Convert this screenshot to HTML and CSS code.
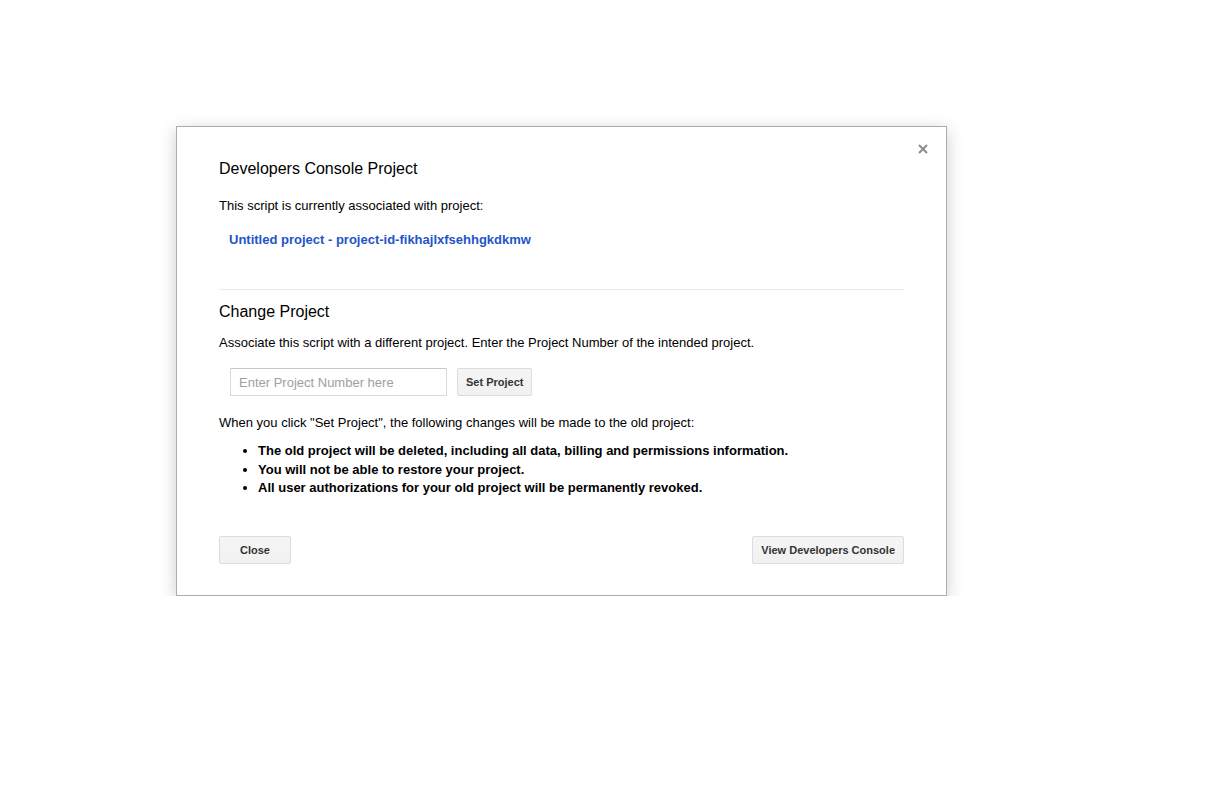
FILE: index.html
```html
<!DOCTYPE html>
<html>
<head>
<meta charset="utf-8">
<link rel="stylesheet" href="styles.css">
</head>
<body>
<div class="dialog">
  <span class="close-x" aria-label="Close">
    <svg width="10" height="10" viewBox="0 0 10 10"><path d="M1 1L9 9M9 1L1 9" stroke="#8c8c8c" stroke-width="2" fill="none"/></svg>
  </span>
  <h2 class="title">Developers Console Project</h2>
  <p class="p1">This script is currently associated with project:</p>
  <a class="proj-link" href="#">Untitled project - project-id-fikhajlxfsehhgkdkmw</a>
  <div class="sep"></div>
  <h2 class="title2">Change Project</h2>
  <p class="p2">Associate this script with a different project. Enter the Project Number of the intended project.</p>
  <div class="row">
    <input class="num-input" type="text" placeholder="Enter Project Number here">
    <button class="btn">Set Project</button>
  </div>
  <p class="p3">When you click "Set Project", the following changes will be made to the old project:</p>
  <ul class="changes">
    <li>The old project will be deleted, including all data, billing and permissions information.</li>
    <li>You will not be able to restore your project.</li>
    <li>All user authorizations for your old project will be permanently revoked.</li>
  </ul>
  <div class="footer">
    <button class="btn btn-close">Close</button>
    <button class="btn">View Developers Console</button>
  </div>
</div>
</body>
</html>
```
FILE: styles.css
```css
html, body {
  margin: 0;
  background: #fff;
}
body {
  padding: 126px 0 0 176px;
  font-family: "Liberation Sans", Arial, sans-serif;
  color: #000;
}
.dialog {
  position: relative;
  width: 685px;
  padding: 30px 42px 31px 42px;
  border: 1px solid #acacac;
  background: #fff;
  box-shadow: 0 4px 16px rgba(0,0,0,0.2);
}
.close-x {
  position: absolute;
  top: 17px;
  right: 18px;
  width: 10px;
  height: 10px;
  display: block;
}
.close-x svg { display: block; }
.title, .title2 {
  margin: 0;
  font-size: 16px;
  font-weight: normal;
  line-height: 20px;
  color: #000;
}
.title { padding-top: 2px; }
p {
  margin: 0;
  font-size: 13px;
  line-height: 16px;
}
.p1 { margin-top: 19px; }
.proj-link {
  display: block;
  margin-top: 18px;
  padding-left: 10px;
  font-size: 13px;
  line-height: 16px;
  font-weight: bold;
  color: #1f55c8;
  text-decoration: none;
}
.sep {
  margin-top: 41px;
  height: 1px;
  background: #ebebeb;
}
.title2 { margin-top: 12px; }
.p2 { margin-top: 13px; }
.row {
  margin-top: 17px;
  padding-left: 11px;
  display: flex;
  align-items: center;
  gap: 10px;
}
.num-input {
  box-sizing: border-box;
  width: 217px;
  height: 28px;
  margin: 0;
  padding: 0 8px;
  border: 1px solid #d9d9d9;
  border-top-color: #c8c8c8;
  border-radius: 1px;
  font-family: "Liberation Sans", Arial, sans-serif;
  font-size: 13px;
  color: #000;
  outline: none;
}
.num-input::placeholder { color: #a0a0a0; }
.btn {
  box-sizing: border-box;
  height: 28px;
  min-width: 72px;
  margin: 0;
  padding: 0 8px;
  border: 1px solid #dcdcdc;
  border-radius: 2px;
  background: linear-gradient(#f5f5f5, #f1f1f1);
  font-family: "Liberation Sans", Arial, sans-serif;
  font-size: 11px;
  font-weight: bold;
  color: #333;
  cursor: default;
}
.p3 { margin-top: 19px; }
.changes {
  margin: 11px 0 0 0;
  padding-left: 39px;
  font-size: 13px;
  font-weight: bold;
  line-height: 18.5px;
}
.footer {
  margin-top: 38px;
  display: flex;
  justify-content: space-between;
}
```
